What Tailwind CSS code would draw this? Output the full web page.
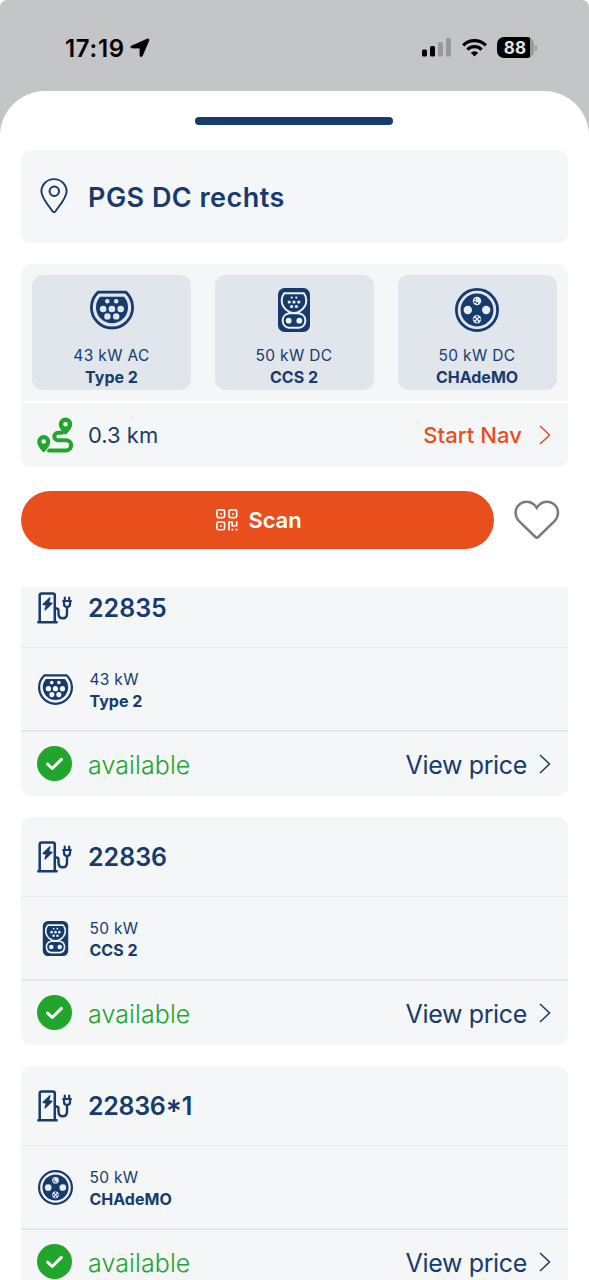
<!DOCTYPE html>
<html lang="en">
<head>
<meta charset="utf-8">
<title>Charging station</title>
<script src="https://cdn.jsdelivr.net/npm/@tailwindcss/browser@4"></script>
</head>
<body class="bg-white">
<svg class="hidden">
  <symbol id="type2" viewBox="0 0 44 44">
    <path d="M8.2 4.1H35.8A20.6 20.6 0 1 1 8.2 4.1Z" fill="none" stroke="currentColor" stroke-width="2.8" stroke-linejoin="round"/>
    <path fill="currentColor" fill-rule="evenodd" d="M10 8.7H34A16 16 0 1 1 10 8.7ZM15 13.3a2.3 2.3 0 1 0 4.6 0a2.3 2.3 0 1 0-4.6 0ZM23.9 13.3a2.3 2.3 0 1 0 4.6 0a2.3 2.3 0 1 0-4.6 0ZM9.8 21a3.3 3.3 0 1 0 6.6 0a3.3 3.3 0 1 0-6.6 0ZM18.6 21a3.3 3.3 0 1 0 6.6 0a3.3 3.3 0 1 0-6.6 0ZM27.4 21a3.3 3.3 0 1 0 6.6 0a3.3 3.3 0 1 0-6.6 0ZM14.2 28.4a3.2 3.2 0 1 0 6.4 0a3.2 3.2 0 1 0-6.4 0ZM23 28.4a3.2 3.2 0 1 0 6.4 0a3.2 3.2 0 1 0-6.4 0Z"/>
  </symbol>
  <symbol id="ccs" viewBox="0 0 44 44">
    <rect x="6" width="32" height="44" rx="6.5" fill="currentColor"/>
    <g fill="none" stroke="#eef1f5" stroke-width="2" stroke-linejoin="round">
      <path d="M12.300 5.200H31.700C33.300 7.200 34.300 9.700 34.300 12.200C34.300 17.200 31.200 21.400 27 23.600Q25.600 24.600 27.500 25.400A7.300 7.300 0 0 1 27 39.800H17A7.300 7.300 0 0 1 16.500 25.400Q18.400 24.600 17 23.600C12.800 21.400 9.700 17.200 9.700 12.200C9.700 9.700 10.700 7.200 12.300 5.200Z"/>
      <path d="M17 23.700Q22 25.700 27 23.700M16.500 25.500H27.500" stroke-width="1.500"/>
    </g>
    <g fill="#eef1f5"><circle cx="19.700" cy="9.600" r="1.100"/><circle cx="24.300" cy="9.600" r="1.100"/><circle cx="17.200" cy="14" r="1.600"/><circle cx="22" cy="14" r="1.600"/><circle cx="26.800" cy="14" r="1.600"/><circle cx="19.600" cy="18.500" r="1.600"/><circle cx="24.400" cy="18.500" r="1.600"/><circle cx="16.700" cy="32.700" r="2.900"/><circle cx="27.300" cy="32.700" r="2.900"/></g>
  </symbol>
  <symbol id="chademo" viewBox="0 0 44 44">
    <circle cx="22" cy="22" r="20.600" fill="none" stroke="currentColor" stroke-width="2.800"/>
    <circle cx="22" cy="22" r="16.400" fill="currentColor"/>
    <g fill="#e8ecf1"><circle cx="12.800" cy="22" r="4.200"/><circle cx="31.200" cy="22" r="4.200"/><circle cx="22" cy="13" r="4.200"/><circle cx="22" cy="31.200" r="4.200"/></g>
    <g fill="currentColor"><circle cx="20" cy="14" r="1"/><circle cx="20.300" cy="11.500" r=".7"/><circle cx="22.300" cy="15" r=".9"/><circle cx="22" cy="28.800" r="1.100"/><circle cx="22" cy="33.600" r="1.100"/><circle cx="19.600" cy="31.200" r="1.100"/><circle cx="24.400" cy="31.200" r="1.100"/></g>
  </symbol>
  <symbol id="charger" viewBox="0 0 36 32">
    <g fill="none" stroke="currentColor" stroke-width="2.500" stroke-linecap="round" stroke-linejoin="round">
      <path d="M2.700 29.500V3.500Q2.700 1.500 4.700 1.500H15.800Q17.800 1.500 17.800 3.500V29.500M1.300 30.200H19.600"/>
      <path d="M18.500 16.500H19.300Q21.500 16.500 21.500 18.700V21.500Q21.500 26.300 25.800 26.300Q30 26.300 30 21.500V16" stroke-width="2.400"/>
      <path d="M27.800 5.500V8.500M32.200 5.500V8.500" stroke-width="2.200"/>
      <path d="M26.200 9H33.900M27 9.500V11.500Q27 15 30 15Q33.100 15 33.100 11.500V9.500" stroke-width="2.200"/>
    </g>
    <path d="M13 5.800L6 12.500L9.400 13.200L8 18L15 11.300L11.600 10.600Z" fill="currentColor" stroke="currentColor" stroke-width="1.200" stroke-linejoin="round"/>
  </symbol>
  <symbol id="chev" viewBox="0 0 12 20"><path d="M1 1L10.500 10L1 19" fill="none" stroke="currentColor" stroke-width="1.500"/></symbol>
  <symbol id="ok" viewBox="0 0 35 35"><circle cx="17.500" cy="17.500" r="17.500" fill="#22a52b"/><path d="M10.600 18.100L15.300 22.500L24.400 13.400" fill="none" stroke="#fff" stroke-width="3" stroke-linecap="round" stroke-linejoin="round"/></symbol>
</svg>
<div class="w-[589px] h-[1280px] overflow-hidden rounded-t-[7px] bg-[#c4c5c7] flex flex-col font-['Inter',sans-serif] text-[#173b6c]">
  <header class="h-[91px] shrink-0 flex items-center pl-[65px] pr-[52px] pt-[4px] text-black">
    <span class="w-[59px] pt-[2px] text-[24px] leading-none font-semibold tracking-[0.7px] whitespace-nowrap">17:19</span>
    <svg class="ml-[6px] w-5 h-5" viewBox="0 0 20 20"><path stroke="#000" stroke-width=".8" stroke-linejoin="round" d="M1.200 8.200L17.500 1Q19.400 .5 18.900 2.400L12.200 18Q10.800 19.600 10 17.800V10.600Q10 10 9.400 10H2Q-.1 9.500 1.200 8.200Z"/></svg>
    <svg class="ml-auto w-[29px] h-[19px]" viewBox="0 0 29 19"><rect y="11.500" width="5" height="7" rx="1.500"/><rect x="8" y="8" width="5" height="10.500" rx="1.500"/><g fill="#98999b"><rect x="16" y="4" width="5" height="14.500" rx="1.500"/><rect x="24" width="5" height="18.500" rx="1.500"/></g></svg>
    <svg class="ml-[11px] w-[25px] h-[19px]" viewBox="0 0 25 19"><g fill="none" stroke="#000" stroke-width="3.200"><path d="M1.200 7.300A16 16 0 0 1 23.800 7.300"/><path d="M5.400 11.600A10 10 0 0 1 19.600 11.600"/></g><path d="M12.500 18.500L8.800 14.700A5.300 5.300 0 0 1 16.200 14.700Z"/></svg>
    <div class="ml-[10px] w-[37px] h-[21px] rounded-[7px] bg-linear-to-r from-black from-[90%] to-[#98999b] to-[90%] flex items-center justify-center text-[#e2e3e5] font-bold text-[17px] leading-none tracking-[0.3px] pr-[1px] pt-px">88</div>
    <div class="ml-px w-[2px] h-[6px] rounded-r-full bg-[#98999b]"></div>
  </header>
  <main class="bg-white rounded-t-[45px] grow min-h-0 px-[21px] flex flex-col">
    <div class="mt-[26px] ml-[174px] w-[198px] h-[8px] shrink-0 rounded-full bg-[#173b6c]"></div>
    <section class="mt-[24.500px] h-[93.500px] shrink-0 rounded-[10px] bg-[#f5f6f8] flex items-center pl-[19px]">
      <svg class="w-[28px] h-[36px]" viewBox="0 0 28 36" fill="none" stroke="currentColor"><path d="M14 34.200Q13.200 34.200 12.500 33.200C8 26.800 1.400 19.500 1.400 13.400A12.600 12.300 0 0 1 26.600 13.400C26.600 19.500 20 26.800 15.500 33.200Q14.800 34.200 14 34.200Z" stroke-width="1.900"/><circle cx="14.300" cy="13.300" r="4.700" stroke-width="2"/></svg>
      <h1 class="ml-[20px] pt-[2px] text-[27px] leading-none font-semibold tracking-[0.47px]">PGS DC rechts</h1>
    </section>
    <section class="mt-[21px] shrink-0 rounded-[10px] overflow-hidden">
      <div class="h-[137px] bg-[#f5f6f8] px-[11px] pt-[11px] flex justify-between">
        <div class="w-[159px] h-[115px] rounded-[11px] bg-[#e1e5ec] flex flex-col items-center pt-[13px]">
          <svg class="size-11"><use href="#type2"/></svg>
          <span class="mt-[13px] text-[15.500px] leading-[22px] tracking-[0.35px]">43 kW AC</span>
          <b class="-mt-px text-[16px] leading-[22px]">Type 2</b>
        </div>
        <div class="w-[159px] h-[115px] rounded-[11px] bg-[#e1e5ec] flex flex-col items-center pt-[13px] pr-px">
          <svg class="size-11"><use href="#ccs"/></svg>
          <span class="mt-[13px] text-[15.500px] leading-[22px] tracking-[0.35px]">50 kW DC</span>
          <b class="-mt-px text-[16px] leading-[22px]">CCS 2</b>
        </div>
        <div class="w-[159px] h-[115px] rounded-[11px] bg-[#e1e5ec] flex flex-col items-center pt-[13px] pr-px">
          <svg class="size-11"><use href="#chademo"/></svg>
          <span class="mt-[13px] text-[15.500px] leading-[22px] tracking-[0.35px]">50 kW DC</span>
          <b class="-mt-px text-[16px] leading-[22px]">CHAdeMO</b>
        </div>
      </div>
      <div class="mt-[1.500px] h-[64.500px] bg-[#f5f6f8] flex items-center pl-[16px] pr-[17px]">
        <svg class="w-[36px] h-[36px]" viewBox="0 0 36 36"><g fill="none" stroke="#22a52b"><path d="M25 15.800H21A3.700 3.700 0 0 0 21 23.200H29A5 5 0 0 1 29 33.400H12" stroke-width="4" stroke-linecap="round"/></g><path fill="#22a52b" fill-rule="evenodd" d="M28.500 .500A6.700 6.700 0 0 1 35.200 7.200C35.200 11 31.500 15 29.300 17.200Q28.500 18 27.700 17.200C25.500 15 21.800 11 21.800 7.200A6.700 6.700 0 0 1 28.500 .500ZM28.500 4.900a2.300 2.300 0 1 0 0 4.600a2.300 2.300 0 1 0 0-4.600Z"/><path fill="#22a52b" stroke="#f5f6f8" stroke-width="1.500" paint-order="stroke" fill-rule="evenodd" d="M6.700 18A6.500 6.500 0 0 1 13.200 24.500C13.200 28.500 9.700 32.500 7.500 34.700Q6.700 35.500 5.900 34.700C3.700 32.500 .2 28.500 .2 24.500A6.500 6.500 0 0 1 6.700 18ZM6.700 22.200a2.300 2.300 0 1 0 0 4.600a2.300 2.300 0 1 0 0-4.600Z"/></svg>
        <span class="ml-[15px] pt-px text-[22px] leading-none">0.3 km</span>
        <span class="ml-auto pt-px text-[22px] leading-none font-medium tracking-[0.1px] text-[#e84e1b]">Start Nav</span>
        <svg class="ml-[17px] w-[12px] h-[20px] text-[#e84e1b]"><use href="#chev"/></svg>
      </div>
    </section>
    <div class="mt-[23.500px] h-[58.500px] shrink-0 flex items-center">
      <button class="w-[473px] h-full rounded-full bg-[#e94f1c] text-white flex items-center justify-center gap-[10px] pl-[3px]">
        <svg class="w-[22px] h-[22px]" viewBox="0 0 22 22"><g fill="none" stroke="#fff" stroke-width="1.600"><rect x=".9" y=".9" width="7.700" height="7.700" rx="1.500"/><rect x="13" y=".9" width="7.700" height="7.700" rx="1.500"/><rect x=".9" y="13" width="7.700" height="7.700" rx="1.500"/><path d="M13 21.500V13H16.200V16.800H20.700V12.200"/></g><path fill="#fff" d="M4 4h1.800v1.800H4zM16 4h1.800v1.800H16zM4 16h1.800v1.800H4zM15.500 19.700h1.800v1.800h-1.800zM19.700 19.700h1.800v1.800h-1.800z"/></svg>
        <span class="text-[22px] leading-none font-semibold tracking-[-0.1px]">Scan</span>
      </button>
      <svg class="ml-[19.500px] w-[46px] h-[40px]" viewBox="0 0 46 40"><path d="M22.800 7.900C18.600 1.500 11.500 .2 6.300 3.700C.5 7.700 .2 15.800 4.800 20.800L21.400 37Q22.800 38.300 24.200 37L40.800 20.800C45.400 15.800 45.100 7.700 39.300 3.700C34.100 .2 27 1.500 22.800 7.900Z" fill="none" stroke="#7b7b7b" stroke-width="2.500"/></svg>
    </div>
    <div class="mt-[38px] grow min-h-0 overflow-hidden">
      <div class="-mt-[19px] flex flex-col gap-[21px]">
        <article class="h-[228px] shrink-0 rounded-[10px] bg-[#f5f6f8]">
          <div class="h-[79px] flex items-center pl-[15.500px]"><svg class="w-[36px] h-[32px]"><use href="#charger"/></svg><h2 class="ml-[15.500px] pt-px text-[25px] leading-none font-semibold">22835</h2></div>
          <div class="h-[85px] border-t border-b-2 border-[#e4e7ef] flex items-center pl-[17px]"><svg class="size-[35px]"><use href="#type2"/></svg><div class="ml-[16.500px] mt-[3px] leading-[22px]"><p class="text-[15.500px] tracking-[0.3px]">43 kW</p><p class="-mt-px text-[16px] font-bold">Type 2</p></div></div>
          <div class="h-[64px] flex items-center pl-[16px] pr-[17px]"><svg class="-mt-px size-[35px]"><use href="#ok"/></svg><span class="ml-[16px] pt-[2px] text-[25px] leading-none font-light tracking-[0.1px] text-[#22a52b]">available</span><span class="ml-auto pt-[2px] text-[25px] leading-none tracking-[-0.35px]">View price</span><svg class="ml-[12px] w-[12px] h-[20px]"><use href="#chev"/></svg></div>
        </article>
        <article class="h-[228px] shrink-0 rounded-[10px] bg-[#f5f6f8]">
          <div class="h-[79px] flex items-center pl-[15.500px]"><svg class="w-[36px] h-[32px]"><use href="#charger"/></svg><h2 class="ml-[15.500px] pt-px text-[25px] leading-none font-semibold">22836</h2></div>
          <div class="h-[85px] border-t border-b-2 border-[#e4e7ef] flex items-center pl-[17px]"><svg class="size-[35px]"><use href="#ccs"/></svg><div class="ml-[16.500px] mt-[3px] leading-[22px]"><p class="text-[15.500px] tracking-[0.3px]">50 kW</p><p class="-mt-px text-[16px] font-bold">CCS 2</p></div></div>
          <div class="h-[64px] flex items-center pl-[16px] pr-[17px]"><svg class="-mt-px size-[35px]"><use href="#ok"/></svg><span class="ml-[16px] pt-[2px] text-[25px] leading-none font-light tracking-[0.1px] text-[#22a52b]">available</span><span class="ml-auto pt-[2px] text-[25px] leading-none tracking-[-0.35px]">View price</span><svg class="ml-[12px] w-[12px] h-[20px]"><use href="#chev"/></svg></div>
        </article>
        <article class="h-[228px] shrink-0 rounded-[10px] bg-[#f5f6f8]">
          <div class="h-[79px] flex items-center pl-[15.500px]"><svg class="w-[36px] h-[32px]"><use href="#charger"/></svg><h2 class="ml-[15.500px] pt-px text-[25px] leading-none font-semibold tracking-[-0.3px] [font-feature-settings:'calt'_1]">22836*1</h2></div>
          <div class="h-[85px] border-t border-b-2 border-[#e4e7ef] flex items-center pl-[17px]"><svg class="size-[35px]"><use href="#chademo"/></svg><div class="ml-[16.500px] mt-[3px] leading-[22px]"><p class="text-[15.500px] tracking-[0.3px]">50 kW</p><p class="-mt-px text-[16px] font-bold">CHAdeMO</p></div></div>
          <div class="h-[64px] flex items-center pl-[16px] pr-[17px]"><svg class="-mt-px size-[35px]"><use href="#ok"/></svg><span class="ml-[16px] pt-[2px] text-[25px] leading-none font-light tracking-[0.1px] text-[#22a52b]">available</span><span class="ml-auto pt-[2px] text-[25px] leading-none tracking-[-0.35px]">View price</span><svg class="ml-[12px] w-[12px] h-[20px]"><use href="#chev"/></svg></div>
        </article>
      </div>
    </div>
  </main>
</div>
</body>
</html>
